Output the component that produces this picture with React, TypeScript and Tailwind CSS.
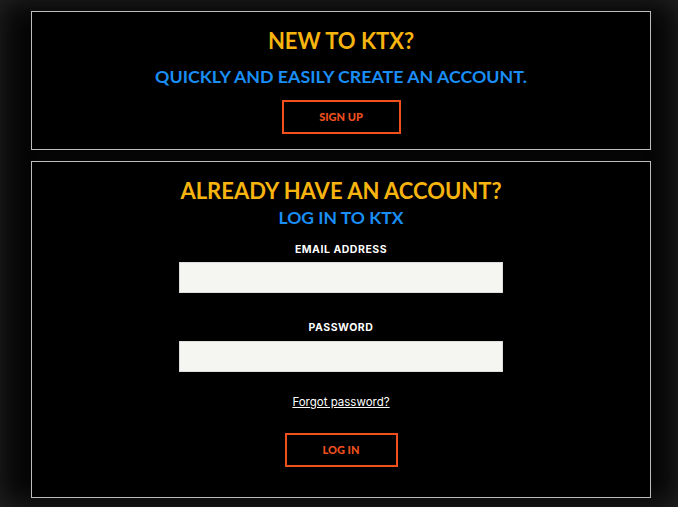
import React from 'react'

const head = { fontFamily: 'Lato, "Open Sans", sans-serif' }
const label = { fontFamily: 'Inter, "Noto Sans", sans-serif' }

function Field({ name, type }: { name: string; type: string }) {
  return (
    <div className="flex flex-col items-center">
      <label style={label} className="text-[10.5px] font-bold tracking-[0.05em] text-white leading-none mb-[7px]">{name}</label>
      <input type={type} className="w-[324px] h-[31px] bg-[#f5f5f2] border border-[#ddd] outline-none" />
    </div>
  )
}

function OutlineButton({ children, w }: { children: React.ReactNode; w: string }) {
  return (
    <button style={head} className={`${w} h-[34px] border-2 border-[#f0501e] text-[#f0501e] text-[11px] font-black flex items-center justify-center`}>
      {children}
    </button>
  )
}

export default function App() {
  return (
    <div className="w-[678px] h-[507px] bg-[#050505] shadow-[inset_0_0_30px_#262626] pl-[31px] pr-[27px] pt-[11px] flex flex-col gap-[11px] overflow-hidden">

      {/* ── Sign up ── */}
      <section className="h-[139px] border border-[#bdbdbd] bg-black flex flex-col items-center pt-[18px]">
        <h2 style={head} className="text-[22px] font-bold text-[#f7b40f] leading-none">NEW TO KTX?</h2>
        <p style={head} className="mt-[16px] text-[17.8px] font-bold text-[#1a8ef5] leading-none">QUICKLY AND EASILY CREATE AN ACCOUNT.</p>
        <div className="mt-[14px]">
          <OutlineButton w="w-[119px]">SIGN UP</OutlineButton>
        </div>
      </section>

      {/* ── Log in ── */}
      <section className="h-[337px] border border-[#bdbdbd] bg-black flex flex-col items-center pt-[18px]">
        <h2 style={head} className="text-[22px] font-bold text-[#f7b40f] leading-none">ALREADY HAVE AN ACCOUNT?</h2>
        <p style={head} className="mt-[7px] text-[17.5px] font-bold text-[#1a8ef5] leading-none">LOG IN TO KTX</p>
        <div className="mt-[18px]">
          <Field name="EMAIL ADDRESS" type="email" />
        </div>
        <div className="mt-[30px]">
          <Field name="PASSWORD" type="password" />
        </div>
        <a href="#" style={label} className="mt-[25px] text-[11.5px] text-white underline leading-none">Forgot password?</a>
        <div className="mt-[25px]">
          <OutlineButton w="w-[113px]">LOG IN</OutlineButton>
        </div>
      </section>
    </div>
  )
}
